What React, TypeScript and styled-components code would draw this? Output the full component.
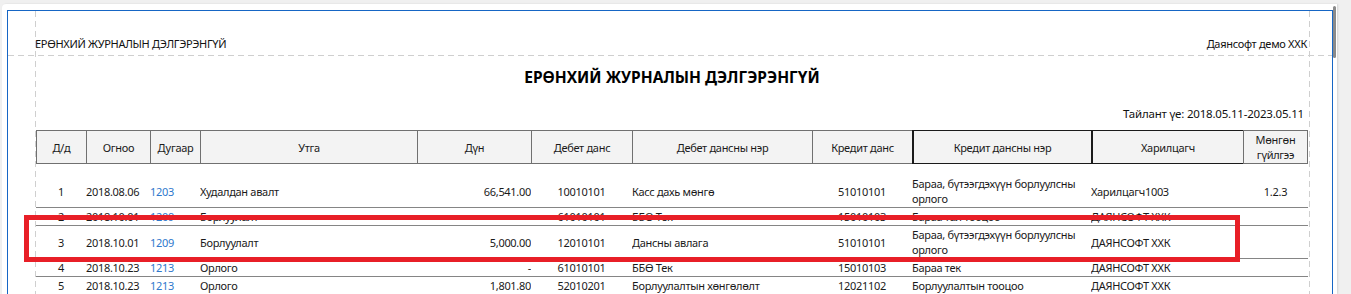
import React from "react";
import styled, { createGlobalStyle } from "styled-components";

const GlobalStyle = createGlobalStyle`
  html, body { margin: 0; padding: 0; overflow: hidden; }
  body {
    background: #f0f0f0;
    font-family: "Noto Sans", "Open Sans", sans-serif;
    color: #1a1a1a;
  }
`;

type Align = "left" | "center" | "right";
interface Col {
  key: string;
  title: string;
  width: number;
  align: Align;
  link?: boolean;
  dark?: boolean;
}

const cols: Col[] = [
  { key: "no", title: "Д/д", width: 50, align: "center" },
  { key: "date", title: "Огноо", width: 64, align: "left" },
  { key: "num", title: "Дугаар", width: 50, align: "left", link: true },
  { key: "desc", title: "Утга", width: 217, align: "left" },
  { key: "amt", title: "Дүн", width: 114, align: "right" },
  { key: "dacc", title: "Дебет данс", width: 101, align: "center" },
  { key: "dname", title: "Дебет дансны нэр", width: 180, align: "left" },
  { key: "cacc", title: "Кредит данс", width: 100, align: "center" },
  { key: "cname", title: "Кредит дансны нэр", width: 179, align: "left", dark: true },
  { key: "partner", title: "Харилцагч", width: 152, align: "left", dark: true },
  { key: "cash", title: "Мөнгөн гүйлгээ", width: 65, align: "center" },
];

type RowKind = "tall" | "first" | "short";
type Row = { h: RowKind; cells: Record<string, string> };

const rows: Row[] = [
  {
    h: "first",
    cells: {
      no: "1",
      date: "2018.08.06",
      num: "1203",
      desc: "Худалдан авалт",
      amt: "66,541.00",
      dacc: "10010101",
      dname: "Касс дахь мөнгө",
      cacc: "51010101",
      cname: "Бараа, бүтээгдэхүүн борлуулсны орлого",
      partner: "Харилцагч1003",
      cash: "1.2.3",
    },
  },
  {
    h: "short",
    cells: {
      no: "2",
      date: "2018.10.01",
      num: "1209",
      desc: "Борлуулалт",
      amt: "-",
      dacc: "61010101",
      dname: "ББӨ Тек",
      cacc: "15010103",
      cname: "Бараа тал тооцоо",
      partner: "ДАЯНСОФТ ХХК",
      cash: "",
    },
  },
  {
    h: "tall",
    cells: {
      no: "3",
      date: "2018.10.01",
      num: "1209",
      desc: "Борлуулалт",
      amt: "5,000.00",
      dacc: "12010101",
      dname: "Дансны авлага",
      cacc: "51010101",
      cname: "Бараа, бүтээгдэхүүн борлуулсны орлого",
      partner: "ДАЯНСОФТ ХХК",
      cash: "",
    },
  },
  {
    h: "short",
    cells: {
      no: "4",
      date: "2018.10.23",
      num: "1213",
      desc: "Орлого",
      amt: "-",
      dacc: "61010101",
      dname: "ББӨ Тек",
      cacc: "15010103",
      cname: "Бараа тек",
      partner: "ДАЯНСОФТ ХХК",
      cash: "",
    },
  },
  {
    h: "short",
    cells: {
      no: "5",
      date: "2018.10.23",
      num: "1213",
      desc: "Орлого",
      amt: "1,801.80",
      dacc: "52010201",
      dname: "Борлуулалтын хөнгөлөлт",
      cacc: "12021102",
      cname: "Борлуулалтын тооцоо",
      partner: "ДАЯНСОФТ ХХК",
      cash: "",
    },
  },
];

const gridTemplate = cols.map((c) => `${c.width}px`).join(" ");

const Root = styled.div`
  position: relative;
  height: 294px;
  overflow: hidden;
`;

const Viewer = styled.div`
  position: relative;
  margin: 4px 0 0 2px;
  width: 1335px;
  height: 290px;
  background: #ffffff;
  border-top-left-radius: 4px;
  box-shadow: 1px 0 2px rgba(0, 0, 0, 0.12);
  padding: 6px 0 0 5px;
  box-sizing: border-box;
  overflow: hidden;
`;

const ScrollThumb = styled.div`
  position: absolute;
  top: 2px;
  right: 1px;
  width: 3px;
  height: 52px;
  border-radius: 2px;
  background: #8a8a8a;
`;

const Page = styled.div`
  position: relative;
  width: 1326px;
  height: 400px;
  box-sizing: border-box;
  border: 1px solid #1666c5;
  background: #ffffff;
`;

const GuideV = styled.div<{ $left: number }>`
  position: absolute;
  top: 0;
  bottom: 0;
  left: ${(p) => p.$left}px;
  width: 1px;
  background: repeating-linear-gradient(to bottom, #cfcfcf 0 6px, transparent 6px 10px);
  pointer-events: none;
`;

const GuideH = styled.div<{ $top: number }>`
  position: absolute;
  left: 0;
  right: 0;
  top: ${(p) => p.$top}px;
  height: 1px;
  background: repeating-linear-gradient(to right, #cfcfcf 0 6px, transparent 6px 10px);
  pointer-events: none;
`;

const PageHeader = styled.div`
  display: flex;
  justify-content: space-between;
  align-items: flex-end;
  height: 44px;
  box-sizing: border-box;
  padding: 25px 25px 4px 27px;
  font-size: 11px;
  line-height: 15px;
  letter-spacing: -0.3px;
  color: #111;
`;

const Content = styled.div`
  display: flex;
  flex-direction: column;
  padding: 0 24px 0 28px;
`;

const Title = styled.h1`
  margin: 12px 0 0;
  font-size: 15.5px;
  line-height: 20px;
  font-weight: 700;
  text-align: center;
  color: #000;
`;

const Period = styled.div`
  margin-top: 19px;
  padding-right: 4px;
  font-size: 11.5px;
  line-height: 16px;
  letter-spacing: -0.2px;
  text-align: right;
  color: #111;
`;

const Table = styled.div`
  margin-top: 8px;
  width: 1272px;
  display: flex;
  flex-direction: column;
  font-size: 11px;
  letter-spacing: -0.3px;
`;

const HeadRow = styled.div`
  display: grid;
  grid-template-columns: ${gridTemplate};
  height: 34px;
`;

const HeadCell = styled.div<{ $dark?: boolean; $last?: boolean }>`
  display: flex;
  align-items: center;
  justify-content: center;
  text-align: center;
  box-sizing: border-box;
  padding: 0 4px;
  background: #f3f3f3;
  line-height: 15px;
  color: #1a1a1a;
  border-top: 1px solid ${(p) => (p.$dark ? "#1a1a1a" : "#707070")};
  border-bottom: 1px solid ${(p) => (p.$dark ? "#1a1a1a" : "#707070")};
  border-left: ${(p) => (p.$dark ? "2px solid #1a1a1a" : "1px solid #707070")};
  border-right: ${(p) => (p.$last ? "1px solid #707070" : "none")};
`;

const heights: Record<RowKind, number> = { first: 44, tall: 33, short: 18 };

const BodyRow = styled.div<{ $h: RowKind }>`
  display: grid;
  grid-template-columns: ${gridTemplate};
  box-sizing: border-box;
  height: ${(p) => heights[p.$h]}px;
  flex-shrink: 0;
  padding-top: ${(p) => (p.$h === "first" ? 11 : 0)}px;
  border-bottom: 1px solid #858585;
  overflow: hidden;
`;

const Cell = styled.div<{ $align: Align; $link?: boolean }>`
  display: flex;
  align-items: center;
  justify-content: ${(p) =>
    p.$align === "center" ? "center" : p.$align === "right" ? "flex-end" : "flex-start"};
  text-align: ${(p) => p.$align};
  line-height: 15px;
  color: ${(p) => (p.$link ? "#2f78cc" : "#1a1a1a")};
  white-space: normal;
  overflow: hidden;
`;

const Annotation = styled.div`
  position: absolute;
  left: 24px;
  top: 215px;
  width: 1216px;
  height: 47px;
  box-sizing: border-box;
  border: 5px solid #e81f27;
  pointer-events: none;
`;

export default function App() {
  return (
    <Root>
      <GlobalStyle />
      <Viewer>
        <ScrollThumb />
        <Page>
          <PageHeader>
            <span>ЕРӨНХИЙ ЖУРНАЛЫН ДЭЛГЭРЭНГҮЙ</span>
            <span>Даянсофт демо ХХК</span>
          </PageHeader>
          <Content>
            <Title>ЕРӨНХИЙ ЖУРНАЛЫН ДЭЛГЭРЭНГҮЙ</Title>
            <Period>Тайлант үе: 2018.05.11-2023.05.11</Period>
            <Table>
              <HeadRow>
                {cols.map((c, i) => (
                  <HeadCell key={c.key} $dark={c.dark} $last={i === cols.length - 1}>
                    {c.title}
                  </HeadCell>
                ))}
              </HeadRow>
              {rows.map((r, ri) => (
                <BodyRow key={ri} $h={r.h}>
                  {cols.map((c) => (
                    <Cell key={c.key} $align={c.align} $link={c.link}>
                      {r.cells[c.key]}
                    </Cell>
                  ))}
                </BodyRow>
              ))}
            </Table>
          </Content>
          <GuideV $left={27} />
          <GuideV $left={1301} />
          <GuideH $top={44} />
        </Page>
      </Viewer>
      <Annotation />
    </Root>
  );
}
